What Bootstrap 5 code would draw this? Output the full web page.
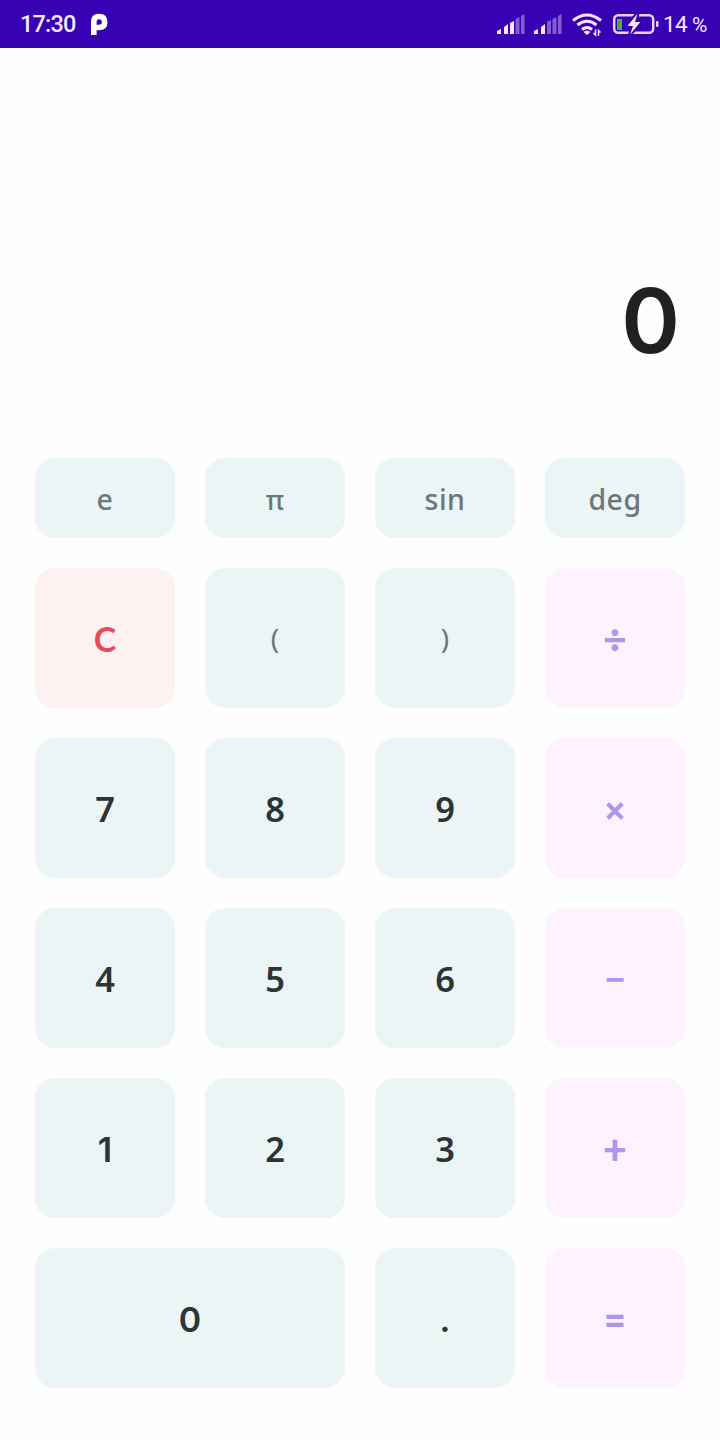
<!DOCTYPE html>
<html lang="en">
<head>
<meta charset="utf-8">
<meta name="viewport" content="width=device-width, initial-scale=1">
<title>Calculator</title>
<link href="https://cdn.jsdelivr.net/npm/bootstrap@5.3.0/dist/css/bootstrap.min.css" rel="stylesheet">
<style>
body{font-family:"Noto Sans","Open Sans",sans-serif;background:#fefefe;height:1440px;overflow:hidden}
.statusbar{height:48px;background:#3700b3;color:#f6e6ff;padding:0 15px 0 20px;font-family:Roboto,sans-serif;font-size:23.500px;font-weight:500;line-height:50px}
.clock{width:71px;letter-spacing:-.8px}
.level{width:42px;font-size:22.500px;font-weight:400;letter-spacing:-.6px;white-space:nowrap}
.percent{font-size:21px}
.statusbar svg{display:block;flex:none}
.display-area{height:410px;padding:0 40px 93px 0;font-family:Inter,sans-serif;font-size:89px;font-weight:560;line-height:1;color:#212121}
.keypad{padding:0 35px}
.keypad .row{--bs-gutter-x:30px;--bs-gutter-y:30px}
.key{--bs-btn-border-width:0;--bs-btn-border-radius:20px;--bs-btn-padding-y:0;--bs-btn-padding-x:0;--bs-btn-bg:#ebf5f6;--bs-btn-color:#2b3436;height:140px;width:100%;font-size:34.500px;font-weight:580;line-height:1;padding-top:2px;display:flex;align-items:center;justify-content:center}
.key-round{font-family:Inter,sans-serif;font-size:34px;font-weight:600;padding-top:3px}
.key-fn{--bs-btn-color:#6d7679;height:80px;font-size:28.500px;font-weight:490;letter-spacing:.5px;padding-top:2px}
.key-pi{font-size:27px;letter-spacing:0}
.key-paren{--bs-btn-color:#6d7679;font-size:28px;font-weight:450;padding-top:0}
.key-clear{--bs-btn-bg:#fef1f2;--bs-btn-color:#e84a57;font-family:Lato,sans-serif;font-weight:700;font-size:34px;padding-top:1px}
.key-op{--bs-btn-bg:#fdf2fd;--bs-btn-color:#b294ea;font-size:39px;font-weight:700}
.key-divide,.key-plus{font-family:Lato,sans-serif;font-size:41px;font-weight:900;padding-top:0}
.key-minus{font-size:35px;padding-top:1px}
.key-equals{font-family:Inter,sans-serif;font-size:35px;font-weight:700;padding-top:0}
</style>
</head>
<body>
<header class="statusbar d-flex align-items-center">
  <span class="clock">17:30</span>
  <svg width="17" height="48" viewBox="91 0 17 48"><path fill="none" stroke="#fff" stroke-width="5.600" d="M93.800 35V21.500Q93.800 16.500 99 16.500Q104.700 16.500 104.700 22Q104.700 27.500 99 27.500H95"/></svg>
  <svg class="ms-auto" width="167" height="48" viewBox="496 0 167 48">
    <g fill="#f8e6ff">
      <path d="M497 34v-3l4-2v5zM504 34v-7l4-3v10zM510 34V23l4-2v13z"/>
      <path opacity=".4" d="M515.500 34V19l4-2v17zM521 34V16l3.500-2v20z"/>
      <path d="M534 34v-3l4-2v5zM541 34v-7l4-3v10z"/>
      <path opacity=".4" d="M547 34V22l4-2v14zM552.500 34V19l4-2v17zM558 34V16l3.500-2v20z"/>
    </g>
    <g fill="none" stroke="#f8e6ff" stroke-width="3">
      <path d="M573 20.500Q587 9.500 601 20.500M577.500 25Q587 17.500 596.500 25M582 29.500Q587 25.500 592 29.500"/>
      <path stroke-width="1.500" d="M595.500 29.500v5.500l-2-2M598.500 36v-5.500l2 2"/>
    </g>
    <path fill="#f8e6ff" d="M583.500 32Q587 29 590.500 32L587 35z"/>
    <rect x="614.200" y="15.200" width="39" height="17.600" rx="4" fill="none" stroke="#e7d1f6" stroke-width="2.500"/>
    <path fill="#4caf38" d="M617 19h5v11h-5z"/>
    <path fill="#f8e6ff" stroke="#3700b3" stroke-width="4" paint-order="stroke" d="M637.500 13.500L627.500 26H633L630 34.500L640.500 22H635z"/>
    <rect x="656" y="21" width="2.500" height="6" rx="1" fill="#e7d1f6"/>
  </svg>
  <span class="level">14 <span class="percent">%</span></span>
</header>
<main>
  <div class="display-area d-flex justify-content-end align-items-end"><output>0</output></div>
  <div class="keypad">
    <div class="row">
      <div class="col-3"><button class="btn key key-fn">e</button></div>
      <div class="col-3"><button class="btn key key-fn key-pi">π</button></div>
      <div class="col-3"><button class="btn key key-fn">sin</button></div>
      <div class="col-3"><button class="btn key key-fn">deg</button></div>
      <div class="col-3"><button class="btn key key-clear">C</button></div>
      <div class="col-3"><button class="btn key key-paren">(</button></div>
      <div class="col-3"><button class="btn key key-paren">)</button></div>
      <div class="col-3"><button class="btn key key-op key-divide">÷</button></div>
      <div class="col-3"><button class="btn key">7</button></div>
      <div class="col-3"><button class="btn key">8</button></div>
      <div class="col-3"><button class="btn key">9</button></div>
      <div class="col-3"><button class="btn key key-op">×</button></div>
      <div class="col-3"><button class="btn key">4</button></div>
      <div class="col-3"><button class="btn key">5</button></div>
      <div class="col-3"><button class="btn key">6</button></div>
      <div class="col-3"><button class="btn key key-op key-minus">−</button></div>
      <div class="col-3"><button class="btn key key-round">1</button></div>
      <div class="col-3"><button class="btn key">2</button></div>
      <div class="col-3"><button class="btn key">3</button></div>
      <div class="col-3"><button class="btn key key-op key-plus">+</button></div>
      <div class="col-6"><button class="btn key key-round">0</button></div>
      <div class="col-3"><button class="btn key key-round">.</button></div>
      <div class="col-3"><button class="btn key key-op key-equals">=</button></div>
    </div>
  </div>
</main>
<script src="https://cdn.jsdelivr.net/npm/bootstrap@5.3.0/dist/js/bootstrap.bundle.min.js"></script>
</body>
</html>
